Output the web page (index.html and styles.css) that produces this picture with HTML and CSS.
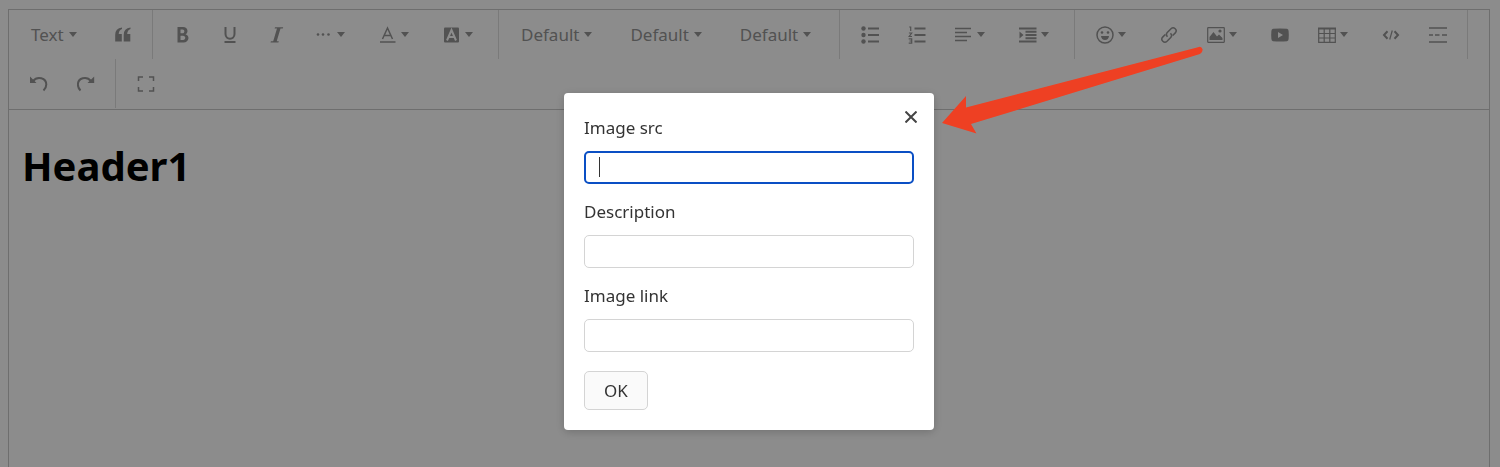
FILE: index.html
```
<!DOCTYPE html>
<html lang="en">
<head>
<meta charset="utf-8">
<title>Editor</title>
<link rel="stylesheet" href="styles.css">
</head>
<body>
<main class="editor">
  <div class="toolbar" role="toolbar" aria-label="Formatting">
    <div class="group">
      <button class="tool menu text">Text<i class="caret"></i></button>
      <button class="tool" aria-label="Quote"><svg class="icon" viewBox="0 0 18 18"><path d="M8 1.500v1.500Q4.900 4 4.700 8H7.800V15.500H1.200V9Q1.200 2 8 1.500zM16.500 1.500v1.500Q13.400 4 13.200 8H16.300V15.500H9.700V9Q9.700 2 16.500 1.500z"/></svg></button>
    </div>
    <div class="group">
      <button class="tool" aria-label="Bold"><svg class="icon" viewBox="0 0 18 18"><path fill-rule="evenodd" d="M3.500 1H9C14.500 1 14.500 7.500 11.500 8.300C16 9.300 15.500 16.500 9.500 16.500H3.500zM6.500 3.500V7.300H8.500C11 7.300 11 3.500 8.500 3.500zM6.500 9.800V14H9C12 14 12 9.800 9 9.800z"/></svg></button>
      <button class="tool" aria-label="Underline"><svg class="icon" viewBox="0 0 18 18"><path class="line" d="M4.500 1V8C4.500 14.200 13.500 14.200 13.500 8V1M3.500 16H14.500"/></svg></button>
      <button class="tool" aria-label="Italic"><svg class="icon" viewBox="0 0 18 18"><path d="M7 1.200h8.200l-.4 1.300h-2.300L8.700 15.200h2.100l-.4 1.300H2.500l.4-1.300h2.300L9 2.500H6.600z"/></svg></button>
      <button class="tool menu" aria-label="More styles"><svg class="icon" viewBox="0 0 18 18"><circle cx="3" cy="8.500" r="1.300"/><circle cx="8" cy="8.500" r="1.300"/><circle cx="13.500" cy="8.500" r="1.300"/></svg><i class="caret"></i></button>
      <button class="tool menu" aria-label="Font color"><svg class="icon" viewBox="0 0 18 18"><path class="line thin" d="M3.500 13L8.500 2L13.500 13M5.200 9.500H11.800M1 16H16.500"/></svg><i class="caret"></i></button>
      <button class="tool menu" aria-label="Background color"><svg class="icon" viewBox="0 0 18 18"><rect x="1" y="1.500" width="15" height="15" rx="1"/><path class="cut" d="M4 14.500L8.500 4L13 14.500M5.800 11H11.200"/></svg><i class="caret"></i></button>
    </div>
    <div class="group">
      <button class="tool menu text">Default<i class="caret"></i></button>
      <button class="tool menu text">Default<i class="caret"></i></button>
      <button class="tool menu text">Default<i class="caret"></i></button>
    </div>
    <div class="group">
      <button class="tool" aria-label="Bulleted list"><svg class="icon" viewBox="0 0 18 18"><circle cx="2.500" cy="2.500" r="2.200"/><circle cx="2.500" cy="9" r="2.200"/><circle cx="2.500" cy="15.500" r="2.200"/><path class="line" d="M7 2.500H18M7 9H18M7 15.500H18"/></svg></button>
      <button class="tool" aria-label="Numbered list"><svg class="icon" viewBox="0 0 18 18"><path class="line" d="M6.500 2.500H17.500M6.500 9H17.500M6.500 15.500H17.500"/><path class="line hair" d="M1.200 1H2.700V5M.9 7H3.700L1.200 10.500H4M.7 12.800H3.700V17.200H.7M1.500 15H3.700"/></svg></button>
      <button class="tool menu" aria-label="Align"><svg class="icon" viewBox="0 0 18 18"><path class="line thin" d="M0 2.500H16M0 6.500H12M0 10.500H16M0 14.500H12"/></svg><i class="caret"></i></button>
      <button class="tool menu" aria-label="Indent"><svg class="icon" viewBox="0 0 18 18"><path class="line" d="M0 2.500H17.500M0 15.500H17.500"/><path class="line" d="M6.500 5.800H17.500M6.500 9H17.500M6.500 12.200H17.500"/><path d="M.5 5.500V12.500L4.500 9z"/></svg><i class="caret"></i></button>
    </div>
    <div class="group">
      <button class="tool menu" aria-label="Emoji"><svg class="icon" viewBox="0 0 18 18"><circle class="line thin" cx="9" cy="9" r="8"/><circle cx="6" cy="6.500" r="1.300"/><circle cx="12" cy="6.500" r="1.300"/><path d="M5 10H13Q12.500 14 9 14T5 10z"/></svg><i class="caret"></i></button>
      <button class="tool" aria-label="Link"><svg class="icon" viewBox="0 0 18 18"><path class="line thin" d="M7.500 10.800C5.800 9 6.200 7.600 7.500 6.300L11 2.700C13.800 .1 17.900 4 15.300 6.900L12.700 9.500M10.500 7.200C12.200 9 11.800 10.400 10.500 11.700L7 15.300C4.200 17.900 .1 14 2.700 11.100L5.300 8.500"/></svg></button>
      <button class="tool menu" aria-label="Image"><svg class="icon" viewBox="0 0 18 18"><rect class="line hair" x=".7" y="1.700" width="16.600" height="14.600" rx=".5"/><circle cx="13" cy="5" r="1.600"/><path d="M2.500 14V11L6.500 6L10 10.500L12 8.500L15.500 12V14z"/></svg><i class="caret"></i></button>
      <button class="tool" aria-label="Video"><svg class="icon" viewBox="0 0 18 18"><path fill-rule="evenodd" d="M2 2.800Q9 2 16 2.800Q17.500 3 17.600 5Q18 9 17.600 13Q17.500 15 16 15.200Q9 16 2 15.200Q.5 15 .4 13Q0 9 .4 5Q.5 3 2 2.800zM7 6V12L12 9z"/></svg></button>
      <button class="tool menu" aria-label="Table"><svg class="icon" viewBox="0 0 18 18"><path class="line hair" d="M.7 2V16.300H17.300V2M6.200 3V16M11.800 3V16M1 7.500H17M1 12H17"/><path class="line" d="M0 2.500H18"/></svg><i class="caret"></i></button>
      <button class="tool" aria-label="Code"><svg class="icon" viewBox="0 0 18 18"><path class="line" d="M5.500 5.300L2 9L5.500 12.700M12.500 5.300L16 9L12.500 12.700"/><path class="line hair" d="M10.300 4.500L7.700 13.500"/></svg></button>
      <button class="tool" aria-label="Divider"><svg class="icon" viewBox="0 0 18 18"><path class="line thin" d="M0 2H18M0 9H4M6 9H10.500M13 9H18M0 16H18"/></svg></button>
    </div>
    <div class="group">
      <button class="tool" aria-label="Undo"><svg class="icon" viewBox="0 0 18 18"><path class="line" d="M3 6C7.500 .5 16.300 3 16.300 9.500Q16.300 13 13.500 15.500"/><path d="M0 1.500V8H6.500z"/></svg></button>
      <button class="tool" aria-label="Redo"><svg class="icon" viewBox="0 0 18 18"><path class="line" d="M14 6C9.500 .5 .9 3 .9 9.500Q.9 13 3.500 15.500"/><path d="M17.200 1.500V8H10.500z"/></svg></button>
    </div>
    <div class="group last">
      <button class="tool" aria-label="Full screen"><svg class="icon" viewBox="0 0 18 18"><path class="line thin" d="M1.500 6V2H6M12 2H16.500V6M16.500 12V16H12M6 16H1.500V12"/></svg></button>
    </div>
  </div>
  <article class="content"><h1 class="title">Header1</h1></article>
</main>

<div class="mask">
  <form class="modal" role="dialog" aria-label="Insert image">
    <button class="close" type="button" aria-label="Close"><svg class="cross" viewBox="0 0 12 12"><path d="M.5 .5L11.500 11.500M11.500 .5L.5 11.500"/></svg></button>
    <label class="label" for="src">Image src</label>
    <div class="field active"><input class="input" id="src" type="text"></div>
    <label class="label" for="desc">Description</label>
    <div class="field"><input class="input" id="desc" type="text"></div>
    <label class="label" for="link">Image link</label>
    <div class="field"><input class="input" id="link" type="text"></div>
    <button class="ok" type="button">OK</button>
    <svg class="arrow" viewBox="0 0 262 88"><path d="M0 77L24 50V61.500L256 1.200Q259 0 260.500 3Q261 6.500 258 8L29 78L34.500 87.500z"/></svg>
  </form>
</div>
</body>
</html>
```
FILE: styles.css
```
* {
  box-sizing: border-box;
}

body {
  margin: 0;
  height: 100vh;
  overflow: hidden;
  background: #fff;
  font-family: "Noto Sans", "Open Sans", sans-serif;
  font-size: 17px;
}

button {
  border: 0;
  padding: 0;
  background: none;
  font: inherit;
  color: inherit;
}

.editor {
  display: flex;
  flex-direction: column;
  min-height: 100%;
  margin: 9px 10px 0 8px;
  border: 1px solid #c8c8c8;
}

.toolbar {
  display: flex;
  flex-wrap: wrap;
  padding-bottom: 1px;
  border-bottom: 1px solid #c8c8c8;
  color: #959595;
}

.group {
  display: flex;
  padding: 0 6px;
  border-right: 1px solid #dedede;
}

.last {
  border-right: 0;
}

.tool {
  display: flex;
  align-items: center;
  justify-content: center;
  width: 47px;
  height: 49px;
}

.menu {
  justify-content: flex-start;
  gap: 4px;
  width: 64px;
  padding-left: 15px;
}

.text {
  gap: 5px;
  width: auto;
  min-width: 84px;
  padding: 0 22px 0 16px;
}

.icon {
  flex: none;
  width: 18px;
  height: 18px;
  fill: currentColor;
}

.line {
  fill: none;
  stroke: currentColor;
  stroke-width: 2;
}

.thin {
  stroke-width: 1.5;
}

.hair {
  stroke-width: 1.2;
}

.cut {
  fill: none;
  stroke: #fff;
  stroke-width: 2;
}

.caret {
  border: 4px solid transparent;
  border-top: 5px solid currentColor;
  border-bottom: 0;
}

.content {
  padding: 26px 13px;
}

.title {
  margin: 0;
  color: #000;
  font-size: 40px;
  line-height: 60px;
}

.mask {
  position: fixed;
  inset: 0;
  display: flex;
  align-items: flex-start;
  justify-content: center;
  padding: 93px 2px 0 0;
  background: rgba(0, 0, 0, 0.45);
}

.modal {
  position: relative;
  display: flex;
  flex-direction: column;
  align-items: stretch;
  width: 370px;
  padding: 20px;
  border-radius: 4px;
  background: #fff;
  box-shadow: 0 2px 10px rgba(0, 0, 0, 0.2);
  color: #333;
}

.label {
  margin-bottom: 8px;
  line-height: 30px;
}

.field {
  position: relative;
  display: flex;
  margin-bottom: 13px;
}

.input {
  flex: 1;
  height: 33px;
  padding: 0 14px;
  border: 1px solid #d4d4d4;
  border-radius: 5px;
  background: #fff;
  font: inherit;
}

.active .input {
  border: 2px solid #0a4fc4;
}

.active::after {
  content: "";
  position: absolute;
  top: 6px;
  left: 15px;
  width: 1px;
  height: 20px;
  background: #333;
}

.ok {
  align-self: flex-start;
  width: 64px;
  height: 39px;
  margin-top: 6px;
  border: 1px solid #d4d4d4;
  border-radius: 5px;
  background: #fafafa;
}

.close {
  position: absolute;
  top: 16px;
  right: 15px;
  display: grid;
  place-items: center;
  width: 16px;
  height: 16px;
}

.cross {
  width: 12px;
  height: 12px;
  stroke: #444;
  stroke-width: 2;
}

.arrow {
  position: absolute;
  top: -47px;
  left: 378px;
  width: 262px;
  height: 88px;
  fill: #ee4023;
}
```
